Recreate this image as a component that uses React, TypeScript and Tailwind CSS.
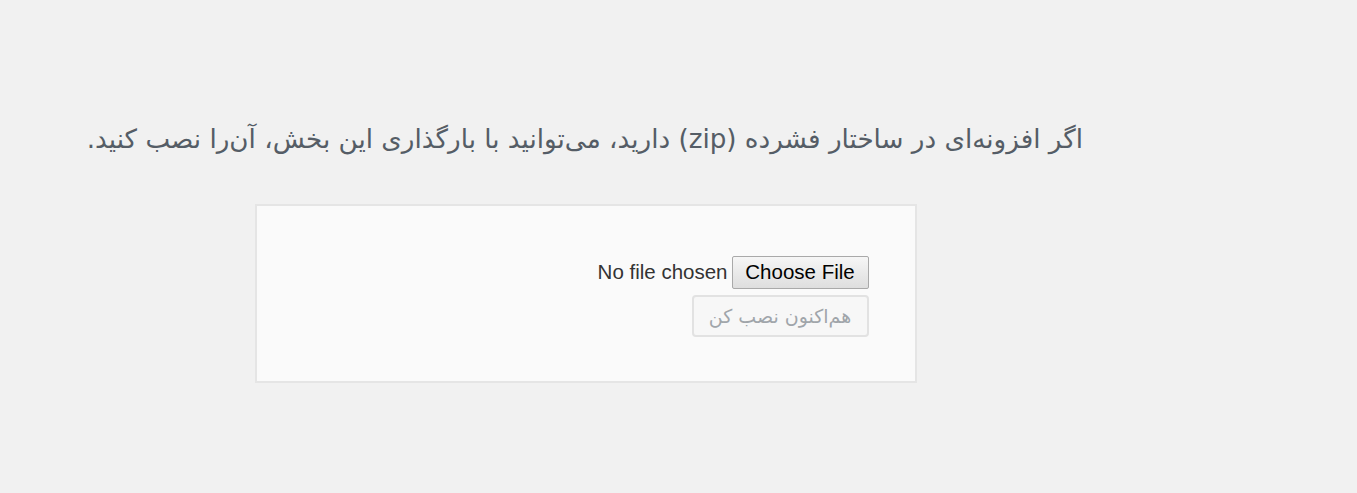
export default function App() {
  return (
    <main className="min-h-[493px] w-full bg-[#f1f1f1] pt-[119px]" dir="rtl">
      <div className="ml-[88px] mr-[274px]">
        <p className="text-right text-[26.2px] leading-[40px] text-[#555d66] font-['DejaVu_Sans',sans-serif] whitespace-nowrap">
          اگر افزونه‌ای در ساختار فشرده (zip) دارید، می‌توانید با بارگذاری این بخش، آن‌را نصب کنید.
        </p>

        <form className="mx-auto mt-[45px] w-[662px] border-2 border-[#e5e5e5] bg-[#fafafa] pr-[46px] pl-[30px] pt-[50px] pb-[44px]">
          <div className="flex items-center gap-[4px] font-['Liberation_Sans',Arial,sans-serif] text-[20.5px]">
            <label className="flex h-[33px] w-[137px] cursor-default items-center justify-center rounded-[2px] border border-[#a9a9a9] bg-gradient-to-b from-[#f6f6f6] to-[#dedede] text-black">
              <span dir="ltr">Choose File</span>
            </label>
            <span dir="ltr" className="text-[#333]">No file chosen</span>
          </div>
          <div className="mt-[6px] flex">
            <button
              type="button"
              disabled
              className="h-[42px] w-[177px] rounded-[4px] border-2 border-[#e2e2e2] bg-[#f7f7f7] text-[19px] text-[#a0a5aa] font-['DejaVu_Sans',sans-serif]"
            >
              هم‌اکنون نصب کن
            </button>
          </div>
        </form>
      </div>
    </main>
  );
}
